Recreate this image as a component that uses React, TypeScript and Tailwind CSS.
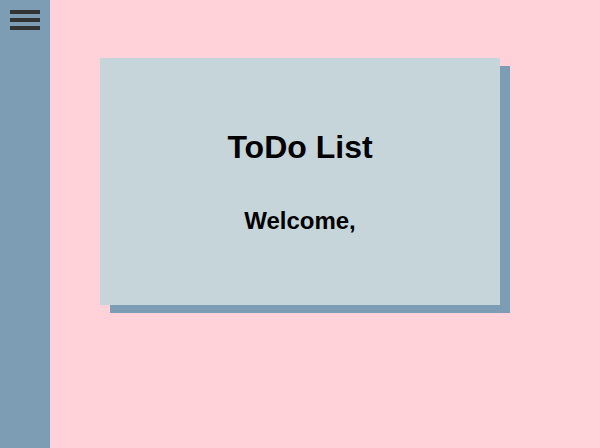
export default function App() {
  return (
    <div className="flex min-h-screen bg-[#ffd1d8] font-['Liberation_Sans',Arial,sans-serif] text-black">
      <aside className="w-[50px] shrink-0 bg-[#7d9db5]">
        <button type="button" aria-label="Open menu" className="flex flex-col gap-1 p-2.5">
          <span className="h-1 w-[30px] bg-[#333]" />
          <span className="h-1 w-[30px] bg-[#333]" />
          <span className="h-1 w-[30px] bg-[#333]" />
        </button>
      </aside>
      <main className="flex-1 px-[50px] pt-[58px]">
        <section className="flex w-full max-w-[400px] flex-col items-center gap-[42px] bg-[#c5d5d9] px-5 pt-[71px] pb-[70px] text-center shadow-[10px_8px_0_#7d9db5]">
          <h1 className="text-[32px] leading-9 font-bold">ToDo List</h1>
          <h2 className="text-2xl leading-7 font-bold">Welcome,</h2>
        </section>
      </main>
    </div>
  );
}
